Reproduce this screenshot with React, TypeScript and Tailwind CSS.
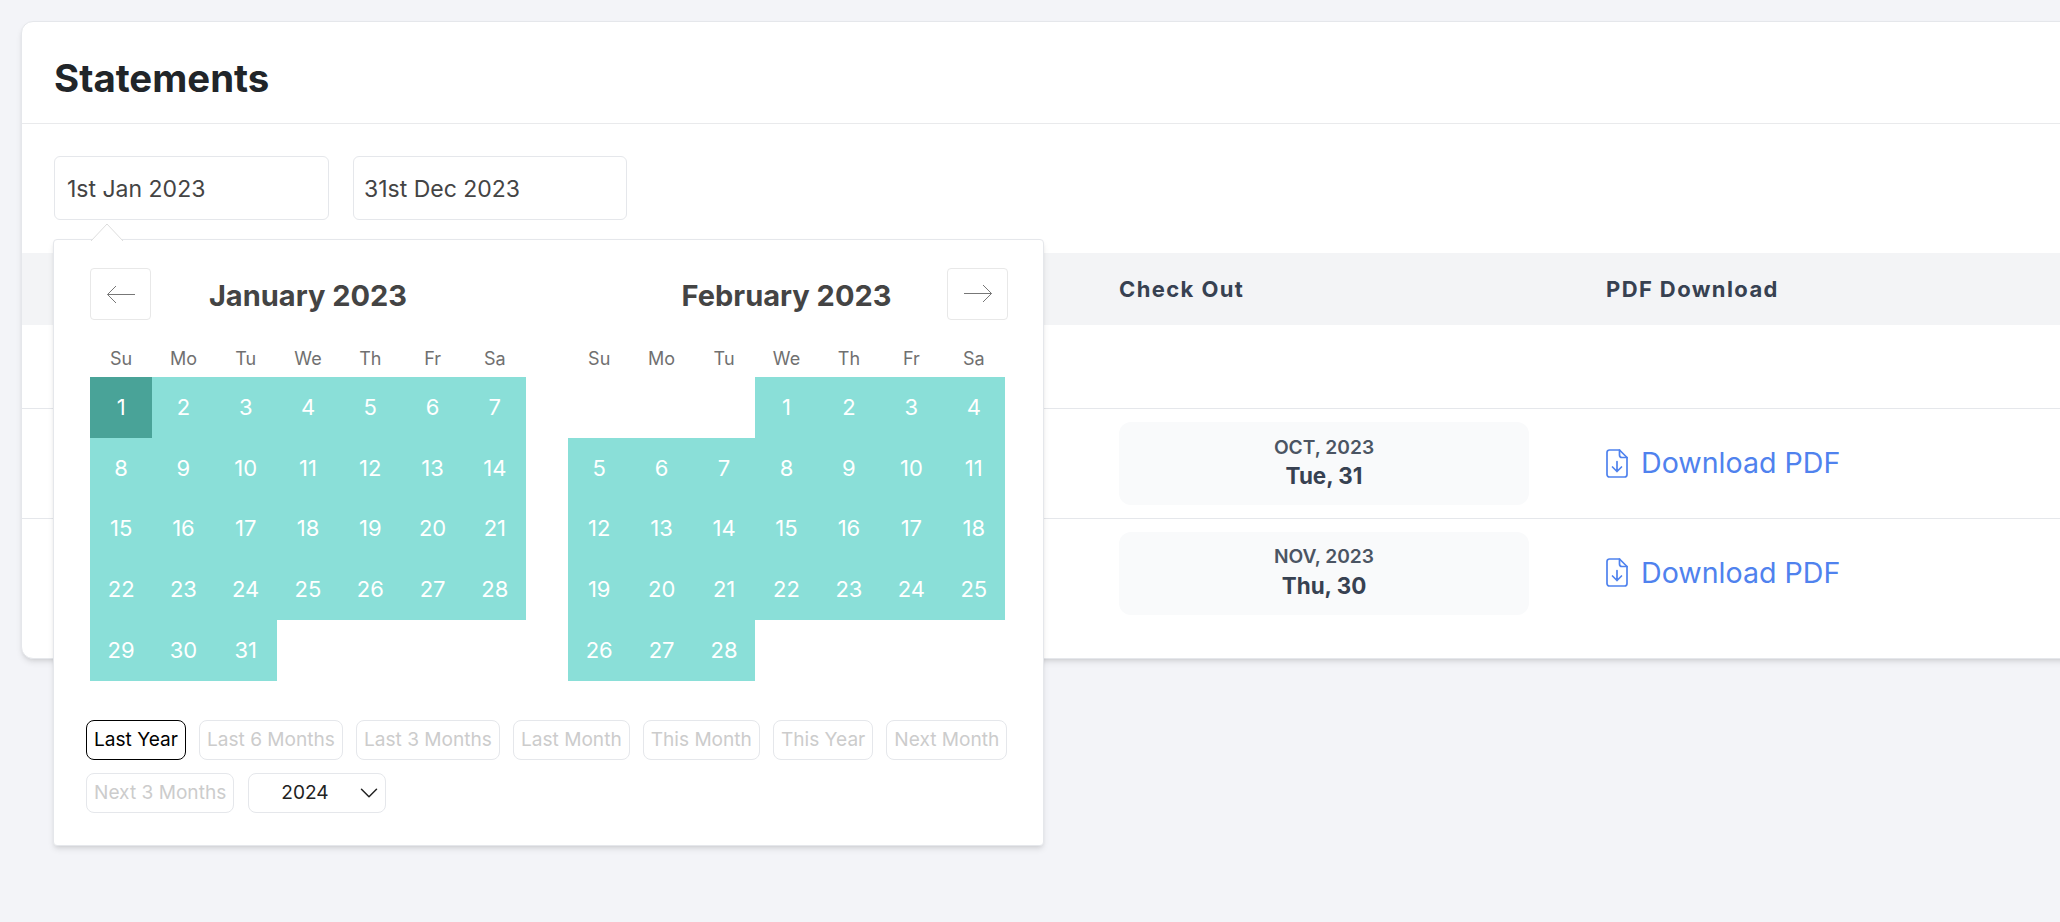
import { ChevronDown } from "lucide-react";

const weekdays = ["Su", "Mo", "Tu", "We", "Th", "Fr", "Sa"];
const presets = ["Last Year", "Last 6 Months", "Last 3 Months", "Last Month", "This Month", "This Year", "Next Month", "Next 3 Months"];

const statements = [
  { month: "OCT, 2023", day: "Tue, 31" },
  { month: "NOV, 2023", day: "Thu, 30" },
];

function PdfIcon() {
  return (
    <svg width="22" height="29" viewBox="0 0 22 29" fill="none" stroke="currentColor" strokeWidth="1.7" strokeLinecap="round" strokeLinejoin="round">
      <path d="M3.5 1H13.5L21 8.5V25.5C21 26.9 19.9 28 18.5 28H3.5C2.1 28 1 26.9 1 25.5V3.5C1 2.1 2.1 1 3.5 1Z" />
      <path d="M13.5 1V6C13.5 7.4 14.6 8.5 16 8.5H21" />
      <path d="M11 12.5V22.5M6.5 18L11 22.5L15.5 18" />
    </svg>
  );
}

function NavArrow({ dir }: { dir: "left" | "right" }) {
  return (
    <svg width="30" height="20" viewBox="0 0 30 20" fill="none" stroke="#777777" strokeWidth="1" className={dir === "right" ? "rotate-180" : ""}>
      <path d="M29 10.5H1.5M10 2L1.5 10.5L10 19" />
    </svg>
  );
}

function Month({ title, offset, days, nav }: { title: string; offset: number; days: number; nav: "prev" | "next" }) {
  return (
    <div className={nav === "prev" ? "w-[436px]" : "w-[437px]"}>
      <div className="relative flex h-[52px] items-center justify-center pt-[4px]">
        {nav === "prev" ? (
          <button className="absolute left-0 top-0 flex h-[52px] w-[61px] items-center justify-center rounded border border-[#e8e8e8]">
            <NavArrow dir="left" />
          </button>
        ) : (
          <button className="absolute -right-[3px] top-0 flex h-[52px] w-[61px] items-center justify-center rounded border border-[#e8e8e8]">
            <NavArrow dir="right" />
          </button>
        )}
        <h3 className="text-[29px] font-bold text-[#444444]">{title}</h3>
      </div>
      <div className="mb-[2px] mt-[21px] grid h-[34px] grid-cols-7 items-center text-center text-[18px] text-[#707070]">
        {weekdays.map((d) => (
          <div key={d}>{d}</div>
        ))}
      </div>
      <div className="grid grid-cols-7 text-[22px] text-white">
        {Array.from({ length: offset }).map((_, i) => (
          <div key={i} />
        ))}
        {Array.from({ length: days }).map((_, i) => (
          <div
            key={i}
            className={`flex h-[60.75px] items-center justify-center ${
              nav === "prev" && i === 0 ? "bg-[#49a398]" : "bg-[#8adfd8]"
            }`}
          >
            {i + 1}
          </div>
        ))}
      </div>
    </div>
  );
}

export default function App() {
  return (
    <div className="h-screen overflow-hidden bg-[#f3f4f8] pl-[21px] pt-[21px] font-['Inter',sans-serif]">
      <div className="h-[638px] w-[2100px] rounded-xl border border-[#e5e7eb] bg-white shadow-md">
        {/* Header */}
        <div className="flex h-[102px] items-center border-b border-[#e9eaec] pl-[32px] pt-[12px]">
          <h1 className="text-[38.4px] font-bold text-[#212529]">Statements</h1>
        </div>

        {/* Date inputs + picker */}
        <div className="relative flex gap-6 pl-[32px] pt-[32px]">
          <div className="flex h-[64px] w-[275px] items-center rounded-md border border-[#e5e7eb] pl-[12px] pt-[2px] text-[23px] text-[#444444]">
            1st Jan 2023
          </div>
          <div className="flex h-[64px] w-[274px] items-center rounded-md border border-[#e5e7eb] pl-[10px] pt-[2px] text-[23px] text-[#444444]">
            31st Dec 2023
          </div>

          <div className="absolute left-[31px] top-[115px] z-10 w-[991px] rounded border border-[#e5e7eb] bg-white pb-[32px] pl-[36px] pt-[28px] shadow-md">
            <svg className="absolute -top-[17px] left-[36px]" width="34" height="18" viewBox="0 0 34 18">
              <path d="M1 18L17 1L33 18" fill="white" stroke="#dddddd" strokeWidth="1" />
            </svg>
            <div className="flex gap-[42px]">
              <Month title="January 2023" offset={0} days={31} nav="prev" />
              <Month title="February 2023" offset={3} days={28} nav="next" />
            </div>
            <div className="-ml-[4px] mt-[39px] flex w-[925px] flex-wrap gap-[13px] text-[19.1px] text-[#cccccc]">
              {presets.map((p, i) => (
                <button
                  key={p}
                  className={`flex h-[40px] items-center rounded-lg border px-[7px] ${
                    i === 0 ? "border-black text-black" : "border-[#e5e7eb]"
                  }`}
                >
                  {p}
                </button>
              ))}
              <div className="relative ml-[1px] flex h-[40px] w-[138px] items-center rounded-lg border border-[#e5e7eb] pl-[32px] text-[#222222]">
                2024
                <ChevronDown className="absolute right-[1px]" size={30} strokeWidth={1.2} />
              </div>
            </div>
          </div>
        </div>

        {/* Table */}
        <div className="mt-[33px]">
          <div className="flex h-[72px] items-center bg-[#f3f4f6] text-[22px] font-bold tracking-[1.4px] text-[#374151]">
            <div className="w-[1097px]" />
            <div className="w-[487px]">Check Out</div>
            <div>PDF Download</div>
          </div>
          <div className="h-[84px] border-b border-[#e5e7eb]" />
          {statements.map((s, i) => (
            <div key={s.month} className={`flex items-center ${i === 0 ? "h-[110px] border-b border-[#e5e7eb]" : "h-[108px]"}`}>
              <div className="w-[1097px]" />
              <div className="w-[487px]">
                <div className="flex h-[83px] w-[410px] flex-col items-center justify-center rounded-xl bg-[#f9fafb] pb-[3px] text-[#4b5563]">
                  <div className="text-[19.2px] font-semibold">{s.month}</div>
                  <div className="text-[22.4px] font-bold leading-[30px] text-[#374151]">{s.day}</div>
                </div>
              </div>
              <a className="flex items-center gap-[13px] text-[28.6px] text-[#4f82ee]">
                <PdfIcon />
                Download PDF
              </a>
            </div>
          ))}
        </div>
      </div>
    </div>
  );
}
